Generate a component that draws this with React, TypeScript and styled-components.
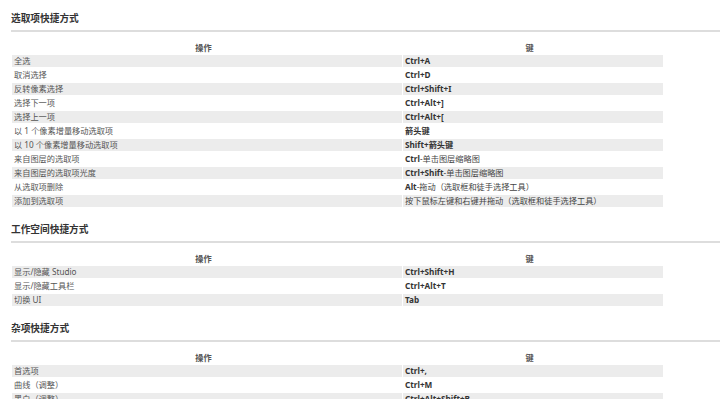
import styled, { createGlobalStyle } from "styled-components";

const GlobalStyle = createGlobalStyle`
  html, body {
    margin: 0;
    padding: 0;
    background: #ffffff;
  }
  body {
    font-family: "Noto Sans", "Noto Sans CJK SC", sans-serif;
    overflow: hidden;
  }
`;

const Page = styled.main`
  padding: 12px 0 0 11px;
  width: 709px;
`;

const Section = styled.section`
  margin-bottom: 14px;
`;

const Heading = styled.h2`
  margin: 0 0 6px;
  font-size: 9.7px;
  line-height: 12px;
  font-weight: 700;
  color: #333333;
  font-family: "Noto Sans CJK SC", sans-serif;
`;

const Rule = styled.hr`
  margin: 0 0 7px;
  border: 0;
  height: 2px;
  background: #dddddd;
`;

const Table = styled.table`
  width: 653px;
  table-layout: fixed;
  border-collapse: separate;
  border-spacing: 1px 2px;
  font-size: 8.2px;
  font-family: "Noto Sans", "Noto Sans CJK SC", sans-serif;
`;

const Col = styled.col<{ $w: number }>`
  width: ${(p) => p.$w}px;
`;

const Th = styled.th`
  height: 12px;
  padding: 0 7px 0 0;
  font-weight: 700;
  color: #555555;
  text-align: center;
  line-height: 12px;
  font-family: "Noto Sans CJK SC", sans-serif;
`;

const Row = styled.tr<{ $shaded: boolean }>`
  background: ${(p) => (p.$shaded ? "#ececec" : "transparent")};
`;

const Td = styled.td`
  height: 12px;
  padding: 0 2px;
  line-height: 12px;
  color: #555555;
  white-space: nowrap;
  overflow: hidden;
`;

const KeyTd = styled(Td)`
  color: #444444;
  b {
    font-weight: 700;
    color: #333333;
  }
`;

type Shortcut = { action: string; keys: React.ReactNode };

const selection: Shortcut[] = [
  { action: "全选", keys: <b>Ctrl+A</b> },
  { action: "取消选择", keys: <b>Ctrl+D</b> },
  { action: "反转像素选择", keys: <b>Ctrl+Shift+I</b> },
  { action: "选择下一项", keys: <b>Ctrl+Alt+]</b> },
  { action: "选择上一项", keys: <b>Ctrl+Alt+[</b> },
  { action: "以 1 个像素增量移动选取项", keys: <b>箭头键</b> },
  { action: "以 10 个像素增量移动选取项", keys: <b>Shift+箭头键</b> },
  {
    action: "来自图层的选取项",
    keys: (
      <>
        <b>Ctrl</b>-单击图层缩略图
      </>
    ),
  },
  {
    action: "来自图层的选取项光度",
    keys: (
      <>
        <b>Ctrl+Shift</b>-单击图层缩略图
      </>
    ),
  },
  {
    action: "从选取项删除",
    keys: (
      <>
        <b>Alt</b>-拖动（选取框和徒手选择工具）
      </>
    ),
  },
  { action: "添加到选取项", keys: "按下鼠标左键和右键并拖动（选取框和徒手选择工具）" },
];

const workspace: Shortcut[] = [
  { action: "显示/隐藏 Studio", keys: <b>Ctrl+Shift+H</b> },
  { action: "显示/隐藏工具栏", keys: <b>Ctrl+Alt+T</b> },
  { action: "切换 UI", keys: <b>Tab</b> },
];

const misc: Shortcut[] = [
  { action: "首选项", keys: <b>Ctrl+,</b> },
  { action: "曲线（调整）", keys: <b>Ctrl+M</b> },
  { action: "黑白（调整）", keys: <b>Ctrl+Alt+Shift+B</b> },
  { action: "色阶（调整）", keys: <b>Ctrl+L</b> },
  { action: "HSL（调整）", keys: <b>Ctrl+U</b> },
];

const ShortcutSection = ({ title, rows }: { title: string; rows: Shortcut[] }) => (
  <Section>
    <Heading>{title}</Heading>
    <Rule />
    <Table>
      <colgroup>
        <Col $w={390} />
        <Col $w={260} />
      </colgroup>
      <thead>
        <tr>
          <Th>操作</Th>
          <Th>键</Th>
        </tr>
      </thead>
      <tbody>
        {rows.map((r, i) => (
          <Row key={r.action} $shaded={i % 2 === 0}>
            <Td>{r.action}</Td>
            <KeyTd>{r.keys}</KeyTd>
          </Row>
        ))}
      </tbody>
    </Table>
  </Section>
);

export default function App() {
  return (
    <>
      <GlobalStyle />
      <Page>
        <ShortcutSection title="选取项快捷方式" rows={selection} />
        <ShortcutSection title="工作空间快捷方式" rows={workspace} />
        <ShortcutSection title="杂项快捷方式" rows={misc} />
      </Page>
    </>
  );
}
